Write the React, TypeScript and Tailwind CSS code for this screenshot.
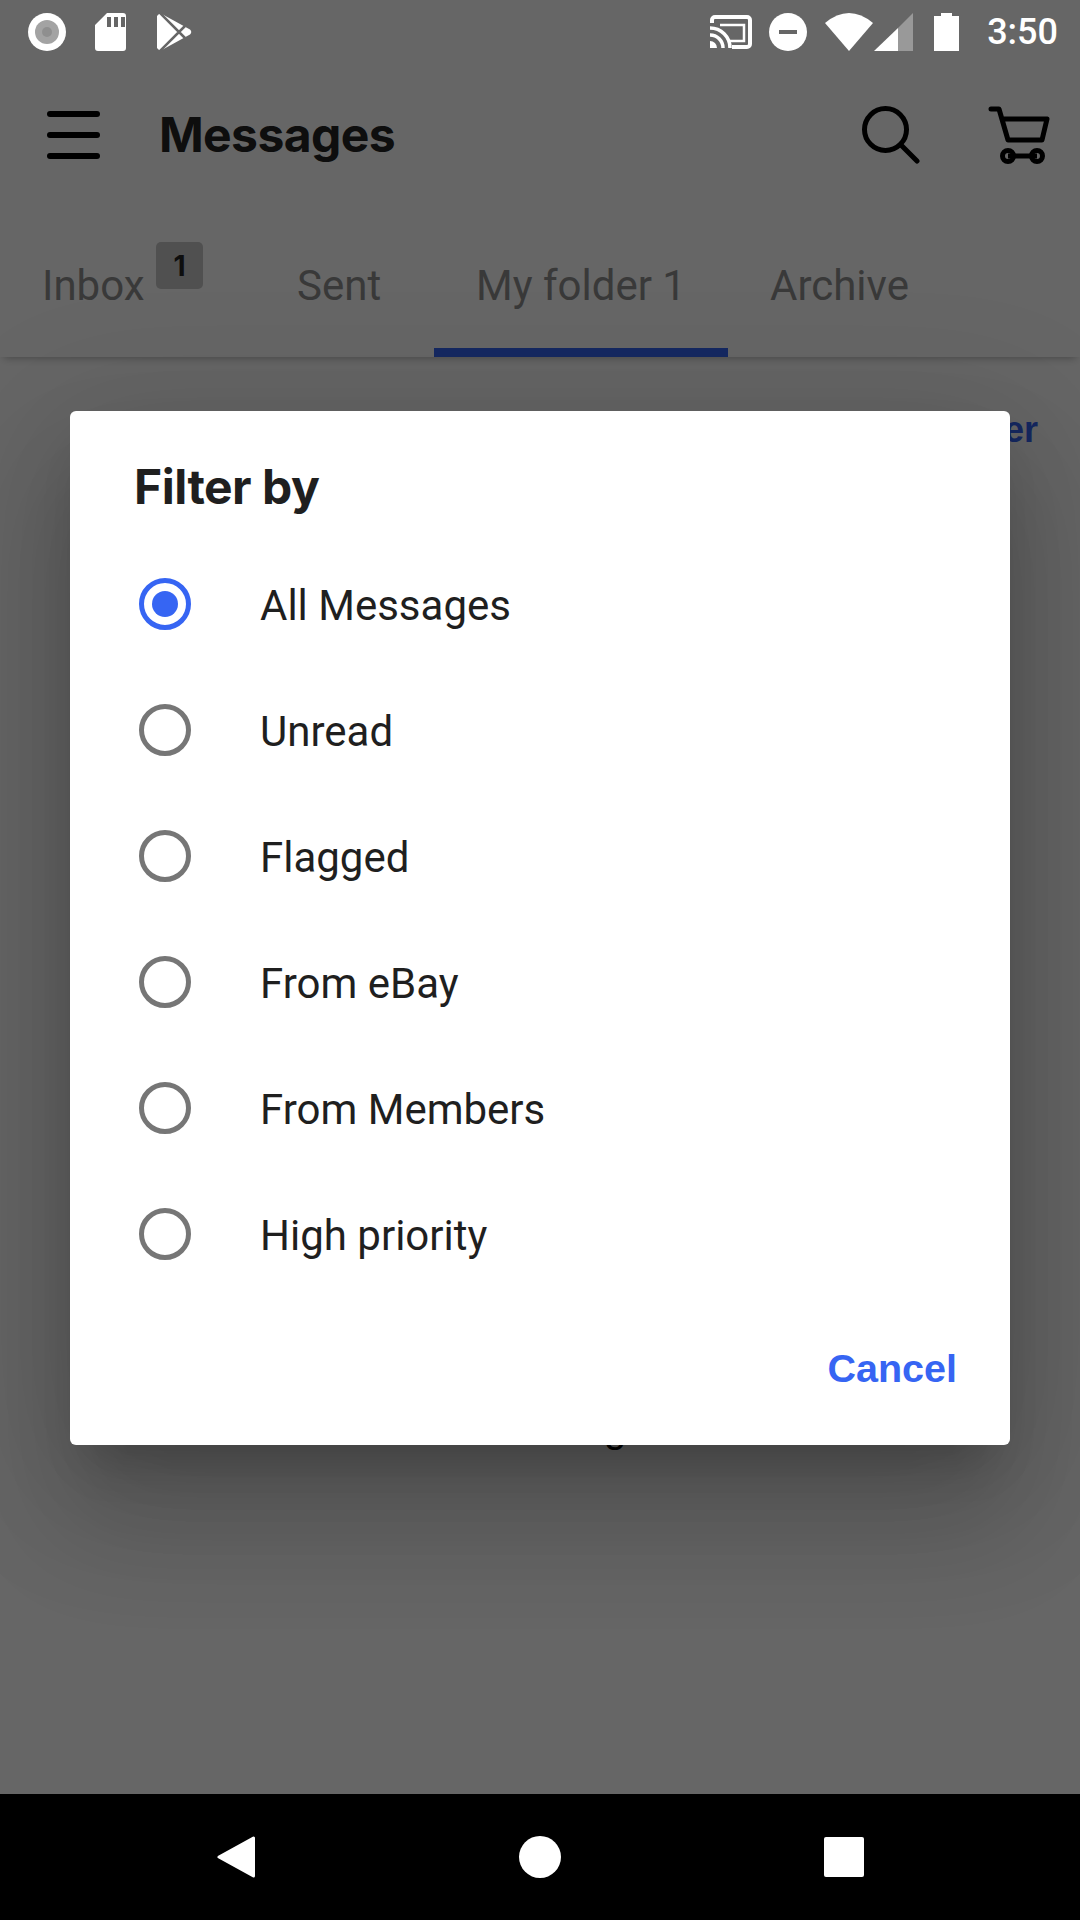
const roboto = "font-['Roboto',sans-serif]";

const options = ['All Messages', 'Unread', 'Flagged', 'From eBay', 'From Members', 'High priority'];

const StatusBar = () => (
  <div className="h-[64px] shrink-0 bg-[#666666] flex items-center pl-[28px] pr-[22px]">
    <svg width="38" height="38" viewBox="0 0 38 38" className="mr-[29px]">
      <circle cx="19" cy="19" r="19" fill="#fff" />
      <circle cx="19" cy="19" r="12" fill="#a3a3a3" />
      <circle cx="19" cy="19" r="5" fill="#8f8f8f" />
    </svg>
    <svg width="31" height="38" viewBox="0 0 31 38" className="mr-[31px]">
      <path fill="#fff" fillRule="evenodd" d="M12 0h16a3 3 0 0 1 3 3v32a3 3 0 0 1-3 3H3a3 3 0 0 1-3-3V12ZM12 4v10h4V4Zm7 0v10h4V4Zm7 0v10h4V4Z" />
    </svg>
    <svg width="36" height="38" viewBox="0 0 36 38">
      <path fill="#fff" d="M0 3L3 0L33 16.500Q35.500 19 33 21.500L3 38L0 35Z" />
      <path fill="none" stroke="#666666" strokeWidth="2.500" d="M2-1L28 25M2 39L28 13" />
    </svg>
    <div className="flex-1" />
    <svg width="42" height="34" viewBox="0 0 42 34" className="mr-[17px]">
      <path fill="none" stroke="#fff" strokeWidth="4" d="M2 8V5a3 3 0 0 1 3-3h32a3 3 0 0 1 3 3v24a3 3 0 0 1-3 3H22" />
      <path fill="none" stroke="#fff" strokeWidth="2.500" d="M10 10h24v16H20" />
      <path fill="none" stroke="#fff" strokeWidth="3.500" d="M0 13a20 20 0 0 1 20 20M0 20a13 13 0 0 1 13 13" />
      <path fill="#fff" d="M0 26a7 7 0 0 1 7 7H0Z" />
    </svg>
    <svg width="38" height="38" viewBox="0 0 38 38" className="mr-[18px]">
      <circle cx="19" cy="19" r="19" fill="#fff" />
      <rect x="10" y="17" width="18" height="4" fill="#666666" />
    </svg>
    <svg width="48" height="38" viewBox="0 0 48 38" className="mr-[1px]">
      <path fill="#fff" d="M0 10Q24-10 48 10L24 38Z" />
    </svg>
    <svg width="39" height="38" viewBox="0 0 39 38" className="mr-[21px]">
      <path fill="#999999" d="M39 0v38H24V15Z" />
      <path fill="#fff" d="M24 15v23H0Z" />
    </svg>
    <svg width="25" height="38" viewBox="0 0 25 38" className="mr-[28px]">
      <path fill="#fff" d="M7 0h11v3h7v35H0V3h7Z" />
    </svg>
    <span className={`${roboto} text-[36px] leading-none font-medium text-white`}>3:50</span>
  </div>
);

const Header = () => (
  <div className="h-[142px] flex items-center pl-[47px]">
    <div className="w-[53px] h-[48px] flex flex-col justify-between">
      <div className="h-[6px] rounded-full bg-black" />
      <div className="h-[6px] rounded-full bg-black" />
      <div className="h-[6px] rounded-full bg-black" />
    </div>
    <h1 className="ml-[59px] font-['Inter',sans-serif] text-[48px] font-bold leading-none text-[#242424] tracking-[-0.6px]">Messages</h1>
    <div className="flex-1" />
    <svg width="58" height="58" viewBox="0 0 58 58" className="mr-[68px]">
      <circle cx="23.500" cy="23.500" r="21" fill="none" stroke="#000" strokeWidth="5" />
      <path d="M39 39l16 16" fill="none" stroke="#000" strokeWidth="5" strokeLinecap="round" />
    </svg>
    <svg width="62" height="60" viewBox="0 0 62 60" className="mr-[30px] mt-[2px]">
      <path d="M3 3h8l9 31h34l5-21H15" fill="none" stroke="#000" strokeWidth="5" strokeLinecap="round" strokeLinejoin="round" />
      <path d="M20 50h29" fill="none" stroke="#000" strokeWidth="5" />
      <circle cx="20" cy="50" r="5.500" fill="none" stroke="#000" strokeWidth="5" />
      <circle cx="49" cy="50" r="5.500" fill="none" stroke="#000" strokeWidth="5" />
    </svg>
  </div>
);

const Tabs = () => (
  <div className={`${roboto} relative h-[151px] flex text-[42px] leading-none text-[#8f8f8f] shadow-[0_5px_8px_-4px_rgba(0,0,0,0.3)]`}>
    <div className="relative w-[297px] pl-[42px] pt-[59px]">
      Inbox
      <span className="absolute left-[156px] top-[36px] w-[47px] h-[47px] rounded-[5px] bg-[#c7c7c7] flex items-center justify-center font-['Inter',sans-serif] text-[28px] font-bold text-[#242424]">1</span>
    </div>
    <div className="w-[137px] pt-[59px]">Sent</div>
    <div className="w-[294px] h-[151px] pl-[42px] pt-[59px] border-b-[9px] border-[#3665f3]">My folder 1</div>
    <div className="pl-[42px] pt-[59px]">Archive</div>
  </div>
);

const FilterDialog = () => (
  <div className="w-[940px] h-[1034px] rounded-[6px] bg-white flex flex-col shadow-[0_72px_114px_9px_rgba(0,0,0,0.14),0_27px_138px_24px_rgba(0,0,0,0.12),0_33px_45px_-21px_rgba(0,0,0,0.2)]">
    <h2 className="pl-[64px] pt-[50px] h-[130px] font-['Inter',sans-serif] text-[48px] font-bold leading-[52px] tracking-[-0.5px] text-[#1f1f1f]">Filter by</h2>
    <div className="flex flex-col">
      {options.map((label, i) => (
        <div key={label} className="h-[126px] flex items-center pl-[69px]">
          {i === 0 ? (
            <div className="w-[52px] h-[52px] rounded-full border-[5px] border-[#3665f3] flex items-center justify-center">
              <div className="w-[26px] h-[26px] rounded-full bg-[#3665f3]" />
            </div>
          ) : (
            <div className="w-[52px] h-[52px] rounded-full border-[5px] border-[#767676]" />
          )}
          <span className={`${roboto} ml-[69px] mt-[3px] text-[42px] leading-none text-[#1f1f1f]`}>{label}</span>
        </div>
      ))}
    </div>
    <div className="flex justify-end pr-[53px] pt-[52px]">
      <span className="font-['Liberation_Sans',sans-serif] text-[39.500px] font-bold leading-none text-[#3665f3]">Cancel</span>
    </div>
  </div>
);

export default function App() {
  return (
    <div className="w-[1080px] h-[1920px] flex flex-col overflow-hidden bg-black">
      <StatusBar />
      <main className="relative flex-1 bg-white flex flex-col">
        <Header />
        <Tabs />
        <div className="flex justify-end pr-[42px] pt-[55px]">
          <span className="font-['Liberation_Sans',sans-serif] text-[36px] font-bold leading-none text-[#3665f3]">Filter</span>
        </div>
        <div className="pt-[960px] pl-[424px] font-['Liberation_Sans',sans-serif] text-[40px] leading-none text-black">No messages</div>
        <div className="absolute inset-0 bg-black/60 flex justify-center pt-[347px]">
          <FilterDialog />
        </div>
      </main>
      <div className="h-[126px] shrink-0 bg-black flex items-center">
        <svg width="38" height="42" viewBox="0 0 38 42" className="ml-[217px]">
          <path fill="#fff" stroke="#fff" strokeWidth="3" strokeLinejoin="round" d="M36.500 2v38L2 21Z" />
        </svg>
        <div className="ml-[264px] w-[42px] h-[42px] rounded-full bg-white" />
        <div className="ml-[263px] w-[40px] h-[40px] rounded-[2px] bg-white" />
      </div>
    </div>
  );
}
